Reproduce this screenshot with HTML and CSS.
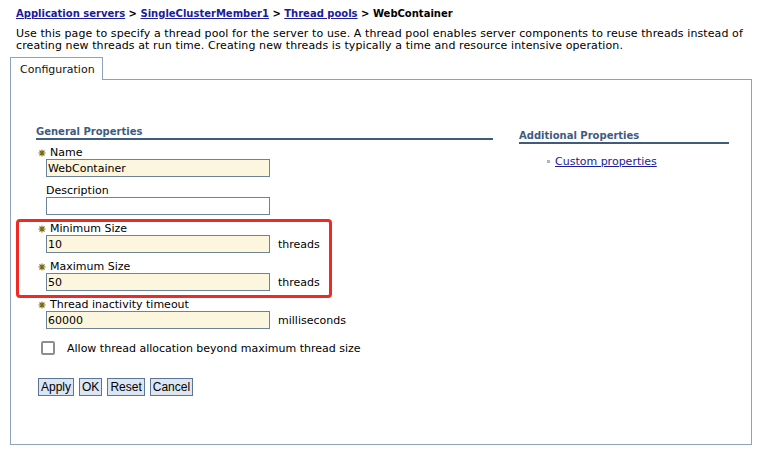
FILE: index.html
```html
<!DOCTYPE html>
<html>
<head>
<meta charset="utf-8">
<link rel="stylesheet" href="styles.css">
</head>
<body>
<div class="breadcrumb">
  <a href="#">Application servers</a> &gt; <a href="#">SingleClusterMember1</a> &gt; <a href="#">Thread pools</a> &gt; WebContainer
</div>
<p class="intro">Use this page to specify a thread pool for the server to use. A thread pool enables server components to reuse threads instead of creating new threads at run time. Creating new threads is typically a time and resource intensive operation.</p>
<div class="tabs">
  <div class="tab">Configuration</div>
  <div class="tab-rest"></div>
</div>
<div class="panel">
  <div class="col-main">
    <h2 class="section-title">General Properties</h2>
    <div class="field first">
      <div class="label"><span class="req"><svg viewBox="0 0 8 8"><path d="M4 0.5V7.5M0.5 4H7.5M1.5 1.5L6.5 6.5M6.5 1.5L1.5 6.5" stroke="#7a6a10" stroke-width="1.1"/></svg></span>Name</div>
      <div class="row"><input class="text req-input" type="text" value="WebContainer"></div>
    </div>
    <div class="field">
      <div class="label plain">Description</div>
      <div class="row"><input class="text" type="text" value=""></div>
    </div>
    <div class="highlight">
      <div class="field">
        <div class="label"><span class="req"><svg viewBox="0 0 8 8"><path d="M4 0.5V7.5M0.5 4H7.5M1.5 1.5L6.5 6.5M6.5 1.5L1.5 6.5" stroke="#7a6a10" stroke-width="1.1"/></svg></span>Minimum Size</div>
        <div class="row"><input class="text req-input" type="text" value="10"><span class="unit">threads</span></div>
      </div>
      <div class="field">
        <div class="label"><span class="req"><svg viewBox="0 0 8 8"><path d="M4 0.5V7.5M0.5 4H7.5M1.5 1.5L6.5 6.5M6.5 1.5L1.5 6.5" stroke="#7a6a10" stroke-width="1.1"/></svg></span>Maximum Size</div>
        <div class="row"><input class="text req-input" type="text" value="50"><span class="unit">threads</span></div>
      </div>
    </div>
    <div class="field after-box">
      <div class="label"><span class="req"><svg viewBox="0 0 8 8"><path d="M4 0.5V7.5M0.5 4H7.5M1.5 1.5L6.5 6.5M6.5 1.5L1.5 6.5" stroke="#7a6a10" stroke-width="1.1"/></svg></span>Thread inactivity timeout</div>
      <div class="row"><input class="text req-input" type="text" value="60000"><span class="unit">milliseconds</span></div>
    </div>
    <label class="check"><span class="box"></span>Allow thread allocation beyond maximum thread size</label>
    <div class="buttons">
      <button class="btn">Apply</button>
      <button class="btn">OK</button>
      <button class="btn">Reset</button>
      <button class="btn">Cancel</button>
    </div>
  </div>
  <div class="col-side">
    <h2 class="section-title">Additional Properties</h2>
    <ul class="links">
      <li><a href="#">Custom properties</a></li>
    </ul>
  </div>
</div>
</body>
</html>
```

FILE: styles.css
```css
* { box-sizing: border-box; }
html, body { margin: 0; padding: 0; background: #fff; }
body {
  font-family: "DejaVu Sans", Verdana, sans-serif;
  font-size: 11px;
  color: #000;
  width: 763px;
  height: 453px;
  overflow: hidden;
}
a { color: #1b1b9e; }
.breadcrumb {
  font-weight: bold;
  font-size: 10px;
  padding: 7px 0 0 16px;
  line-height: 13px;
}
.intro {
  margin: 8px 16px 0 16px;
  line-height: 12px;
  letter-spacing: 0.1px;
}
.tabs {
  display: flex;
  margin: 5px 0 0 10px;
  height: 23px;
}
.tab {
  width: 93px;
  height: 23px;
  border: 1px solid #8ea2bc;
  border-bottom: none;
  padding: 6px 0 0 9px;
  line-height: 12px;
  color: #111;
  background: #fff;
}
.tab-rest {
  width: 649px;
  border-bottom: 1px solid #8ea2bc;
}
.panel {
  margin: 0 0 0 10px;
  width: 742px;
  height: 365px;
  border: 1px solid #8ea2bc;
  border-top: none;
  display: flex;
}
.col-main {
  margin-left: 25px;
  width: 457px;
  padding-top: 45px;
}
.col-side {
  margin-left: 26px;
  width: 210px;
  padding-top: 49px;
}
.section-title {
  margin: 0;
  font-size: 10px;
  font-weight: bold;
  color: #3e5c80;
  line-height: 13px;
  height: 15px;
  border-bottom: 2px solid #3e5c80;
}
.field { margin-top: 8px; }
.field.first { margin-top: 7px; }
.label {
  display: flex;
  align-items: center;
  height: 12px;
  line-height: 12px;
  padding-left: 2px;
}
.label.plain { padding-left: 10px; }
.req {
  display: inline-flex;
  width: 12px;
  align-items: center;
}
.req svg { width: 8px; height: 8px; }
.row {
  display: flex;
  align-items: center;
  padding-left: 10px;
}
input.text {
  width: 224px;
  height: 18px;
  border: 1px solid #6e8299;
  background: #fff;
  font-family: "DejaVu Sans", Verdana, sans-serif;
  font-size: 11px;
  padding: 0 1px;
  margin: 0;
  color: #000;
}
input.req-input { background: #fdf6de; }
.unit { margin-left: 8px; }
.highlight {
  margin: 4px 0 0 -20px;
  width: 316px;
  border: 3px solid #ee2a24;
  border-radius: 4px;
  padding: 0 0 4px 17px;
}
.highlight .field:first-child { margin-top: 1px; }
.field.after-box { margin-top: 1px; }
.check {
  display: flex;
  align-items: center;
  margin-top: 12px;
  padding-left: 5px;
  height: 14px;
}
.box {
  width: 14px;
  height: 14px;
  border: 2px solid #8a8f96;
  border-radius: 2px;
  background: #fff;
  margin-right: 12px;
}
.buttons {
  display: flex;
  gap: 5px;
  margin-top: 23px;
  padding-left: 2px;
}
.btn {
  font-family: "Liberation Sans", Arial, sans-serif;
  font-size: 12px;
  height: 18px;
  padding: 0 2px;
  line-height: 14px;
  background: #dce6f3;
  border: 1px solid #5a7596;
  border-radius: 0;
  color: #000;
  margin: 0;
}
.links {
  list-style: none;
  margin: 11px 0 0 0;
  padding: 0 0 0 28px;
}
.links li {
  display: flex;
  align-items: center;
  line-height: 13px;
}
.links li::before {
  content: "";
  width: 3px;
  height: 3px;
  background: #b5b5b5;
  margin-right: 5px;
}
```
